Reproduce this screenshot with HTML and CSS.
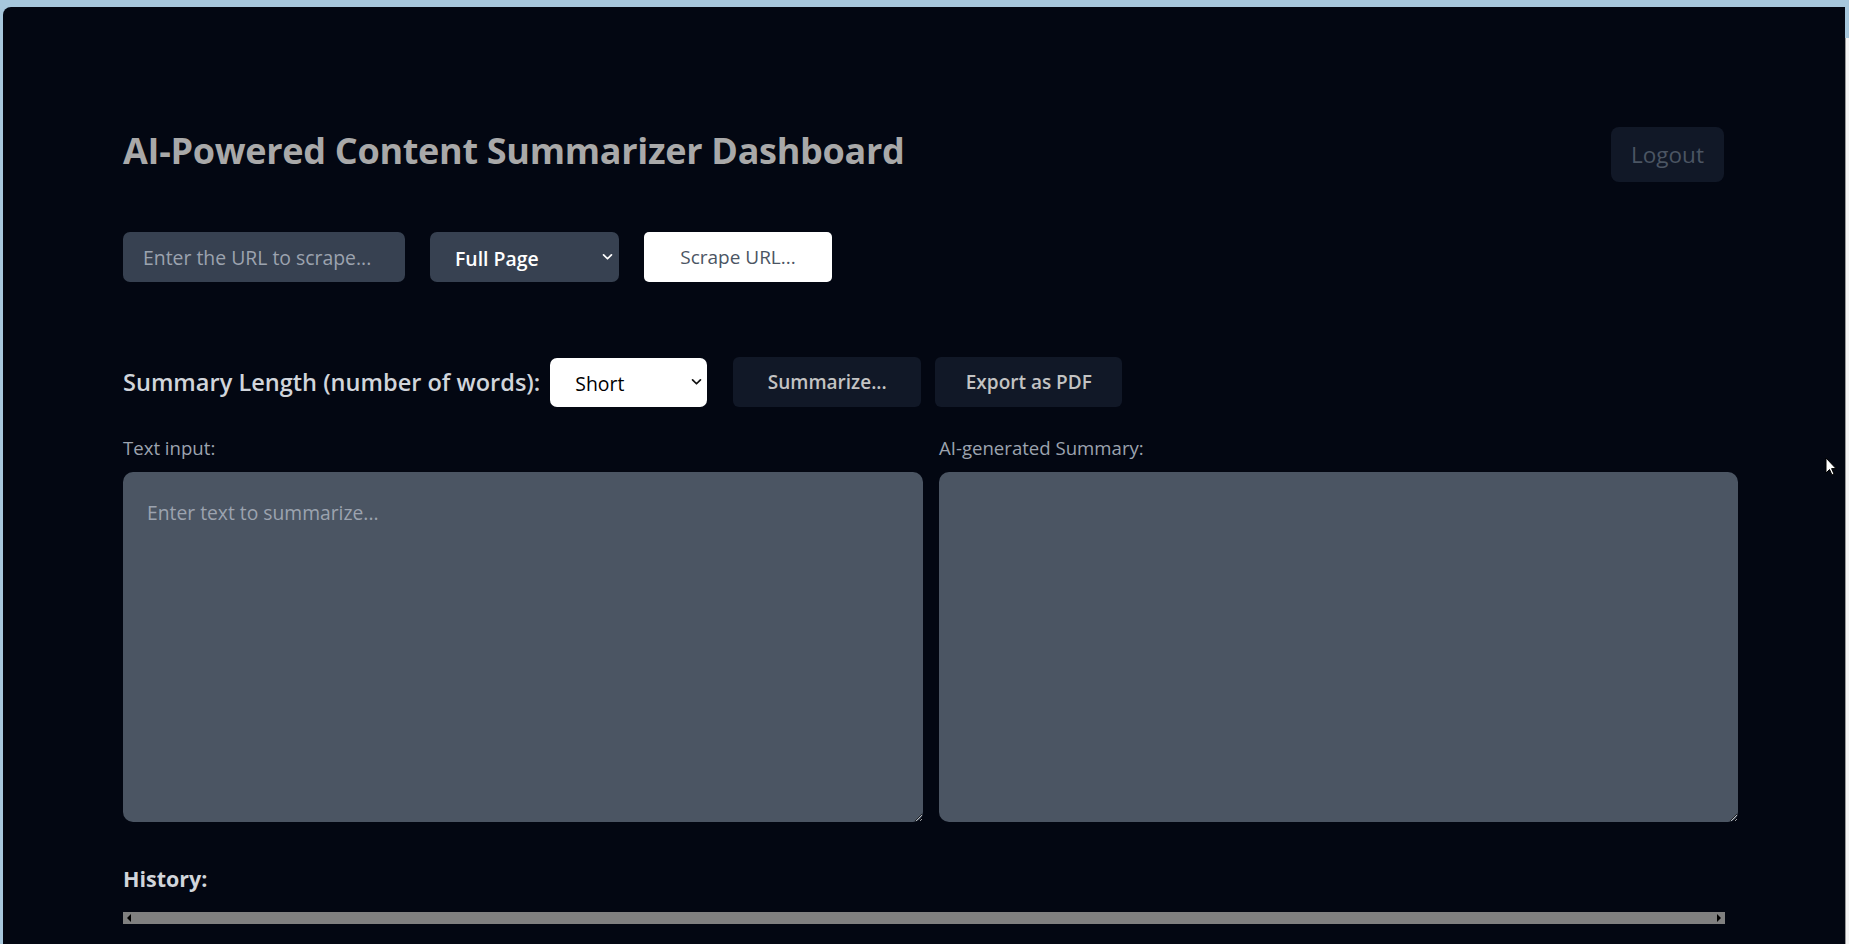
FILE: index.html
```html
<!DOCTYPE html>
<html lang="en">
<head>
<meta charset="utf-8">
<title>AI-Powered Content Summarizer Dashboard</title>
<link rel="stylesheet" href="styles.css">
</head>
<body>
<div class="screen">
  <div class="window">
    <main class="dash">
      <header class="top">
        <h1 class="title">AI-Powered Content Summarizer Dashboard</h1>
        <button class="btn btn-logout">Logout</button>
      </header>

      <section class="row row-scrape">
        <input class="url" type="text" placeholder="Enter the URL to scrape...">
        <div class="select-wrap sel-dark">
          <select class="sel"><option>Full Page</option><option>Main Content</option></select>
          <svg class="chev" viewBox="0 0 12 8" width="11" height="7"><path d="M1.5 1.5 L6 6 L10.5 1.5" fill="none" stroke="currentColor" stroke-width="2" stroke-linecap="round" stroke-linejoin="round"/></svg>
        </div>
        <button class="btn btn-white">Scrape URL...</button>
      </section>

      <section class="row row-sum">
        <label class="len-label">Summary Length (number of words):</label>
        <div class="select-wrap sel-light">
          <select class="sel"><option>Short</option><option>Medium</option><option>Long</option></select>
          <svg class="chev" viewBox="0 0 12 8" width="11" height="7"><path d="M1.5 1.5 L6 6 L10.5 1.5" fill="none" stroke="currentColor" stroke-width="2" stroke-linecap="round" stroke-linejoin="round"/></svg>
        </div>
        <button class="btn btn-dark btn-summ">Summarize...</button>
        <button class="btn btn-dark btn-export">Export as PDF</button>
      </section>

      <section class="panes">
        <div class="pane">
          <label class="pane-label">Text input:</label>
          <textarea class="area" placeholder="Enter text to summarize..."></textarea>
        </div>
        <div class="pane">
          <label class="pane-label">AI-generated Summary:</label>
          <textarea class="area" readonly></textarea>
        </div>
      </section>

      <h2 class="history">History:</h2>
      <div class="hscroll">
        <span class="arrow arrow-left"></span>
        <span class="arrow arrow-right"></span>
      </div>
    </main>
    <svg class="cursor" viewBox="0 0 12 19" width="12" height="19"><path d="M1 1 L1 16 L4.5 12.5 L7 18 L9 17 L6.6 11.6 L11 11.6 Z" fill="#ffffff" stroke="#000000" stroke-width="1"/></svg>
  </div>
  <div class="edge"></div>
</div>
</body>
</html>
```

FILE: styles.css
```css
* { box-sizing: border-box; }

html, body {
  margin: 0;
  padding: 0;
  height: 100%;
}

body {
  background: #a7c7dc;
  font-family: "Open Sans", "Noto Sans", "Liberation Sans", sans-serif;
  overflow: hidden;
}

.screen {
  display: flex;
  height: 944px;
  padding: 7px 0 0 3px;
}

.window {
  position: relative;
  flex: 1;
  background: #030712;
  border-top-left-radius: 8px;
  overflow: hidden;
}

.edge {
  width: 4px;
  margin-top: 31px;
  background: #f4f4f4;
  border-left: 1px solid #9a9a9a;
}

.dash {
  width: 1601px;
  margin-left: 120px;
  padding-top: 120px;
}

.top {
  display: flex;
  align-items: center;
  justify-content: space-between;
  height: 55px;
}

.title {
  margin: 0 0 7px 0;
  font-size: 36px;
  font-weight: 700;
  letter-spacing: -0.3px;
  color: #a9a9a9;
  line-height: 44px;
}

.btn {
  font-family: inherit;
  border: none;
  cursor: pointer;
  display: flex;
  align-items: center;
  justify-content: center;
  padding: 0;
}

.btn-logout {
  width: 113px;
  height: 55px;
  border-radius: 8px;
  background: #111827;
  color: #4b5563;
  font-size: 22.5px;
}

.row {
  display: flex;
  align-items: center;
}

.row-scrape {
  margin-top: 50px;
  gap: 25px;
}

.url {
  width: 282px;
  height: 50px;
  border: none;
  border-radius: 7px;
  background: #374151;
  color: #ffffff;
  font-family: inherit;
  font-size: 19.4px;
  padding: 0 20px;
  outline: none;
}

.url::placeholder { color: #9ca3af; }

.select-wrap {
  position: relative;
  height: 50px;
}

.sel {
  appearance: none;
  -webkit-appearance: none;
  height: 100%;
  width: 100%;
  border: none;
  border-radius: 7px;
  font-family: inherit;
  font-size: 19.4px;
  font-weight: 600;
  outline: none;
}

.chev {
  position: absolute;
  top: 50%;
  transform: translateY(-50%);
  pointer-events: none;
}

.sel-dark { width: 189px; }
.sel-dark .sel {
  background: #374151;
  color: #ffffff;
  padding: 2px 0 0 25px;
}
.sel-dark .chev { right: 6px; color: #ffffff; }

.sel-light { width: 157px; height: 49px; }
.sel-light .sel {
  background: #ffffff;
  color: #000000;
  padding: 2px 0 0 25px;
  font-weight: 500;
}
.sel-light .chev { right: 5px; color: #111111; }

.btn-white {
  width: 188px;
  height: 50px;
  border-radius: 5px;
  background: #ffffff;
  color: #4b5563;
  font-size: 19px;
  font-weight: 500;
}

.row-sum {
  margin-top: 75px;
}

.len-label {
  font-size: 23.55px;
  font-weight: 600;
  color: #d1d5db;
  margin-right: 10px;
}

.btn-dark {
  height: 50px;
  border-radius: 6px;
  background: #111827;
  color: #c3c3c3;
  font-size: 19px;
  font-weight: 600;
}

.btn-summ { width: 188px; margin-left: 26px; }
.btn-export { width: 187px; margin-left: 14px; }

.panes {
  display: grid;
  grid-template-columns: 800px 799px;
  gap: 16px;
  margin-top: 28px;
  width: 1615px;
}

.pane {
  display: flex;
  flex-direction: column;
}

.pane-label {
  font-size: 18.6px;
  line-height: 25px;
  color: #9ca3af;
  margin-bottom: 12px;
}

.area {
  height: 350px;
  border: none;
  border-radius: 10px;
  background: #4b5563;
  color: #ffffff;
  font-family: inherit;
  font-size: 19.3px;
  line-height: 27px;
  padding: 27px 24px;
  outline: none;
  resize: both;
}

.area::placeholder { color: #9ca3af; }

.history {
  margin: 43px 0 0 0;
  font-size: 21.5px;
  line-height: 28px;
  font-weight: 700;
  color: #d1d5db;
}

.hscroll {
  position: relative;
  margin-top: 19px;
  width: 1602px;
  height: 12px;
  background: #808080;
}

.arrow {
  position: absolute;
  top: 2px;
  width: 0;
  height: 0;
  border-top: 4px solid transparent;
  border-bottom: 4px solid transparent;
}

.arrow-left {
  left: 4px;
  border-right: 4px solid #000000;
}

.arrow-right {
  right: 4px;
  border-left: 4px solid #000000;
}

.cursor {
  position: absolute;
  left: 1822px;
  top: 450px;
}
```
